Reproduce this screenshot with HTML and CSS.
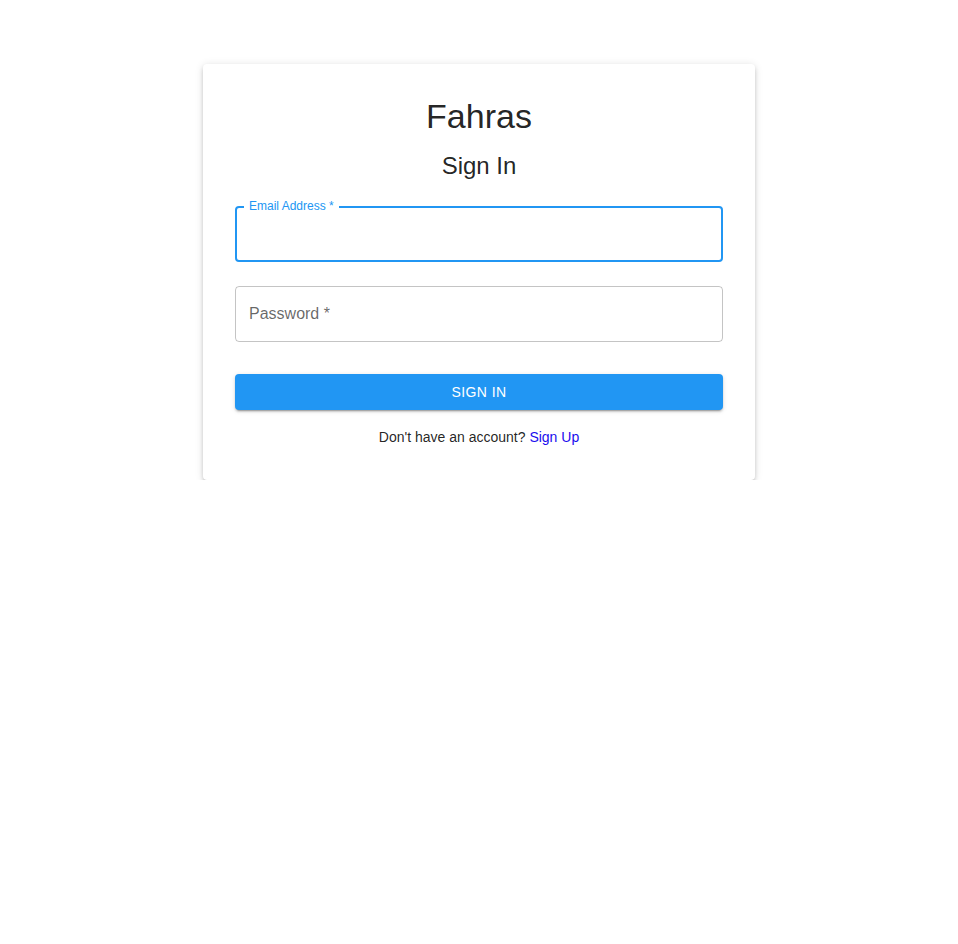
FILE: index.html
```html
<!DOCTYPE html>
<html lang="en">
<head>
<meta charset="utf-8">
<title>Fahras - Sign In</title>
<link rel="stylesheet" href="styles.css">
</head>
<body>
<main class="page">
  <section class="card">
    <h1 class="brand">Fahras</h1>
    <h2 class="heading">Sign In</h2>
    <form class="form">
      <div class="field field-focused">
        <fieldset class="outline"><legend class="legend"><span>Email Address *</span></legend></fieldset>
        <label class="label label-shrink">Email Address *</label>
        <input class="input" type="email">
      </div>
      <div class="field">
        <fieldset class="outline"><legend class="legend legend-empty"><span></span></legend></fieldset>
        <label class="label">Password *</label>
        <input class="input" type="password">
      </div>
      <button class="btn" type="button">Sign In</button>
      <p class="footer">Don't have an account? <a class="link" href="#">Sign Up</a></p>
    </form>
  </section>
</main>
</body>
</html>
```
FILE: styles.css
```css
* { box-sizing: border-box; }
html, body { margin: 0; padding: 0; background: #fff; }
body {
  font-family: "Liberation Sans", Arial, Helvetica, sans-serif;
  color: rgba(0,0,0,0.87);
}
.page {
  display: flex;
  justify-content: center;
  padding-top: 64px;
}
.card {
  width: 552px;
  background: #fff;
  border-radius: 4px;
  box-shadow: 0px 3px 3px -2px rgba(0,0,0,0.2), 0px 3px 4px 0px rgba(0,0,0,0.14), 0px 1px 8px 0px rgba(0,0,0,0.12);
  padding: 32px 32px 33px;
  display: flex;
  flex-direction: column;
  align-items: center;
}
.brand {
  margin: 0;
  font-size: 34px;
  font-weight: 400;
  line-height: 40px;
  height: 40px;
  color: rgba(0,0,0,0.87);
}
.heading {
  margin: 14px 0 0;
  font-size: 24px;
  font-weight: 400;
  line-height: 32px;
  color: rgba(0,0,0,0.87);
}
.form {
  width: 100%;
  margin-top: 16px;
  display: flex;
  flex-direction: column;
}
.field {
  position: relative;
  height: 56px;
  margin-top: 16px;
  margin-bottom: 8px;
}
.field:first-child { margin-top: 8px; }
.outline {
  position: absolute;
  inset: -5px 0 0 0;
  margin: 0;
  padding: 0 8px;
  border: 1px solid rgba(0,0,0,0.23);
  border-radius: 4px;
  pointer-events: none;
}
.field-focused .outline {
  border: 2px solid #2196f3;
  padding: 0 7px;
}
.legend {
  padding: 0;
  font-size: 12px;
  line-height: 11px;
  height: 11px;
  visibility: hidden;
  white-space: nowrap;
}
.legend span { padding: 0 5px; display: inline-block; }
.legend-empty { width: 0; }
.legend-empty span { padding: 0; }
.label {
  position: absolute;
  left: 14px;
  top: 16px;
  font-size: 16px;
  line-height: 23px;
  color: rgba(0,0,0,0.6);
  pointer-events: none;
}
.label-shrink {
  top: -7px;
  font-size: 12px;
  line-height: 14px;
  color: #2196f3;
}
.input {
  width: 100%;
  height: 56px;
  border: 0;
  background: transparent;
  padding: 16px 14px;
  font: inherit;
  font-size: 16px;
  outline: none;
}
.btn {
  margin-top: 24px;
  height: 36px;
  border: 0;
  border-radius: 4px;
  background: #2196f3;
  color: #fff;
  font-family: inherit;
  font-size: 14px;
  font-weight: 500;
  letter-spacing: 0.4px;
  text-transform: uppercase;
  box-shadow: 0px 3px 1px -2px rgba(0,0,0,0.2), 0px 2px 2px 0px rgba(0,0,0,0.14), 0px 1px 5px 0px rgba(0,0,0,0.12);
  cursor: pointer;
}
.footer {
  margin: 17px 0 0;
  text-align: center;
  font-size: 14px;
  line-height: 20px;
  color: rgba(0,0,0,0.87);
}
.link {
  color: #1a0dee;
  text-decoration: none;
}
```
